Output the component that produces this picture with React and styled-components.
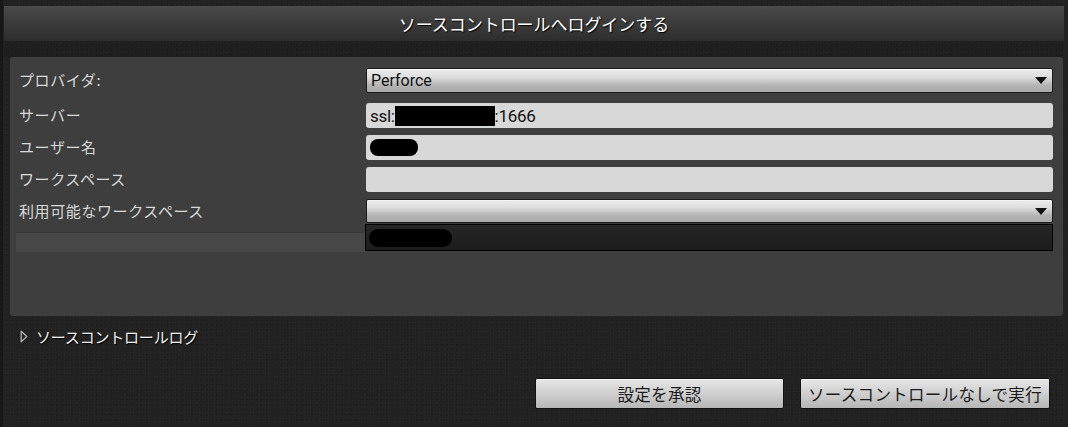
import React from "react";
import styled, { createGlobalStyle } from "styled-components";

const Global = createGlobalStyle`
  html, body { margin: 0; padding: 0; background: #212121; }
  body { font-family: Roboto, "Noto Sans CJK JP", sans-serif; }
`;

const Window = styled.div`
  width: 1068px;
  height: 427px;
  box-sizing: border-box;
  background-color: #222222;
  background-image:
    radial-gradient(rgba(255,255,255,0.025) 1px, transparent 1px),
    radial-gradient(rgba(0,0,0,0.12) 1px, transparent 1px);
  background-size: 3px 3px, 5px 5px;
  background-position: 0 0, 1px 2px;
  border-left: 3px solid #171717;
  padding: 6px 4px 0 1px;
  display: flex;
  flex-direction: column;
  overflow: hidden;
`;

const TitleBar = styled.div`
  height: 35px;
  background: linear-gradient(#4b4b4b, #3c3c3c 45%, #2d2d2d);
  display: flex;
  align-items: center;
  justify-content: center;
  color: #ffffff;
  font-size: 17px;
  text-shadow: 1px 1px 1px #000;
  letter-spacing: -0.05px;
`;

const Gap = styled.div`
  height: 16px;
  background: rgba(0,0,0,0.08);
`;

const Panel = styled.div`
  margin: 0 0 0 6px;
  width: 1053px;
  height: 259px;
  box-sizing: border-box;
  background: #3e3e3e;
  border-radius: 3px;
  padding: 11px 10px 0 9px;
  display: flex;
  flex-direction: column;
`;

const Row = styled.div`
  display: flex;
  align-items: center;
  height: ${(p) => p.$h || 25}px;
  margin-top: ${(p) => p.$mt || 0}px;
`;

const Label = styled.div`
  width: 347px;
  flex: none;
  color: #d9d9d9;
  font-size: 15px;
  font-family: "Noto Sans CJK JP", Roboto, sans-serif;
  letter-spacing: 0.6px;
  margin-top: -2px;
`;

const Combo = styled.div`
  flex: 1;
  height: 100%;
  box-sizing: border-box;
  border: 1px solid #1c1c1c;
  border-radius: 2px;
  background: linear-gradient(#ececec, #dedede 35%, #b4b4b4 70%, #a9a9a9);
  box-shadow: inset 0 1px 0 #f6f6f6;
  display: flex;
  align-items: center;
  padding: 0 0 0 4px;
  color: #111;
  font-size: 16px;
`;

const ComboText = styled.span`
  flex: 1;
`;

const Arrow = styled.span`
  width: 0;
  height: 0;
  border-left: 6px solid transparent;
  border-right: 6px solid transparent;
  border-top: 7px solid #111;
  margin-right: 5px;
`;

const Field = styled.div`
  flex: 1;
  height: 100%;
  box-sizing: border-box;
  background: #d8d8d8;
  border-radius: 3px;
  display: flex;
  align-items: center;
  padding: 0 0 0 4px;
  color: #111;
  font-size: 17px;
  letter-spacing: -0.3px;
`;

const Redact = styled.span`
  display: inline-block;
  background: #000;
  width: ${(p) => p.$w}px;
  height: ${(p) => p.$h}px;
  border-radius: ${(p) => p.$r || 0}px;
`;

const ListRow = styled.div`
  display: flex;
  height: 27px;
  margin-left: -3px;
  margin-top: 1px;
`;

const Strip = styled.div`
  width: 349px;
  margin-top: 8px;
  height: 19px;
  background: #474747;
  border-top: 1px solid #393939;
  flex: none;
`;

const ListItem = styled.div`
  flex: 1;
  box-sizing: border-box;
  background: linear-gradient(#262626, #1c1c1c);
  border: 1px solid #000;
  display: flex;
  align-items: center;
  padding-left: 3px;
`;

const LogRow = styled.div`
  display: flex;
  align-items: center;
  gap: 8px;
  height: 24px;
  margin: 8px 0 0 16px;
  color: #f0f0f0;
  font-size: 15px;
  font-family: "Noto Sans CJK JP", Roboto, sans-serif;
  text-shadow: 1px 1px 1px #000;
  letter-spacing: -0.2px;
`;

const Footer = styled.div`
  display: flex;
  justify-content: flex-end;
  gap: 16px;
  margin-top: 30px;
  padding-right: 14px;
`;

const Button = styled.button`
  width: ${(p) => p.$w}px;
  height: 31px;
  box-sizing: border-box;
  border: 1px solid #111;
  border-radius: 2px;
  background: linear-gradient(#e6e6e6, #d4d4d4 40%, #b6b6b6);
  box-shadow: inset 0 1px 0 #f4f4f4;
  color: #1a1a1a;
  font-family: "Noto Sans CJK JP", Roboto, sans-serif;
  font-size: 16.5px;
  letter-spacing: 0.3px;
  padding: 0;
  cursor: pointer;
`;

const rows = [
  { label: "プロバイダ:", kind: "combo", text: "Perforce", mt: 0, h: 25 },
  { label: "サーバー", kind: "server", mt: 10, h: 25 },
  { label: "ユーザー名", kind: "user", mt: 7, h: 25 },
  { label: "ワークスペース", kind: "field", mt: 7, h: 25 },
  { label: "利用可能なワークスペース", kind: "combo", text: "", mt: 7, h: 24 },
];

function Control({ r }) {
  if (r.kind === "combo")
    return (
      <Combo>
        <ComboText>{r.text}</ComboText>
        <Arrow />
      </Combo>
    );
  if (r.kind === "server")
    return (
      <Field>
        ssl:<Redact $w={100} $h={20} />:1666
      </Field>
    );
  if (r.kind === "user")
    return (
      <Field>
        <Redact $w={48} $h={17} $r={8} />
      </Field>
    );
  return <Field />;
}

function TriangleIcon() {
  return (
    <svg width="8" height="13" viewBox="0 0 8 13">
      <path d="M1.2 1.2 L6.8 6.5 L1.2 11.8 Z" fill="none" stroke="#a8a8a8" strokeWidth="1.4" strokeLinejoin="round" />
    </svg>
  );
}

export default function App() {
  return (
    <>
      <Global />
      <Window>
        <TitleBar>ソースコントロールへログインする</TitleBar>
        <Gap />
        <Panel>
          {rows.map((r) => (
            <Row key={r.label} $mt={r.mt} $h={r.h}>
              <Label>{r.label}</Label>
              <Control r={r} />
            </Row>
          ))}
          <ListRow>
            <Strip />
            <ListItem>
              <Redact $w={83} $h={18} $r={9} />
            </ListItem>
          </ListRow>
        </Panel>
        <LogRow>
          <TriangleIcon />
          <span>ソースコントロールログ</span>
        </LogRow>
        <Footer>
          <Button $w={249}>設定を承認</Button>
          <Button $w={250}>ソースコントロールなしで実行</Button>
        </Footer>
      </Window>
    </>
  );
}
